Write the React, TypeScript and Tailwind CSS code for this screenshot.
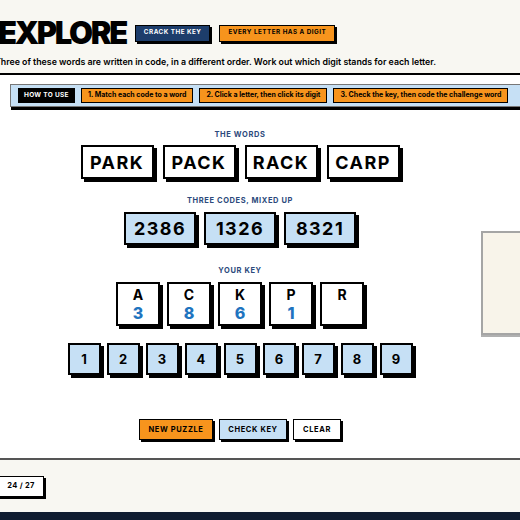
const WORDS = ["PARK", "PACK", "RACK", "CARP"]
const CODES = ["2386", "1326", "8321"]
const KEY: { letter: string; digit?: string }[] = [
    { letter: "A", digit: "3" },
    { letter: "C", digit: "8" },
    { letter: "K", digit: "6" },
    { letter: "P", digit: "1" },
    { letter: "R" },
]
const DIGITS = ["1", "2", "3", "4", "5", "6", "7", "8", "9"]
const STEPS = [
    "1. Match each code to a word",
    "2. Click a letter, then click its digit",
    "3. Check the key, then code the challenge word",
]

const SectionLabel = ({ children }: { children: string }) => (
    <div className="text-[7.5px] leading-none font-bold tracking-[0.08em] text-[#2c4a7c]">{children}</div>
)

export default function App() {
    return (
        <div className="w-[520px] h-[520px] overflow-hidden bg-white flex flex-col font-['Inter',sans-serif] text-black">
            {/* header */}
            <header className="h-[75px] shrink-0 bg-[#f8f7f2] border-b-2 border-black">
                <div className="flex items-center gap-[9px] pt-[17px]">
                    <h1 className="ml-[-2px] text-[31px] leading-[32px] font-black tracking-[-0.075em]">EXPLORE</h1>
                    <span className="h-[17px] px-[8px] flex items-center bg-[#1d3d6b] border border-black shadow-[2px_2px_0_#000] text-white text-[6.3px] font-bold tracking-[0.08em]">
                        CRACK THE KEY
                    </span>
                    <span className="h-[17px] px-[8px] flex items-center bg-[#f7941d] border border-black shadow-[2px_2px_0_#000] text-[6.3px] font-bold tracking-[0.08em]">
                        EVERY LETTER HAS A DIGIT
                    </span>
                </div>
                <p className="ml-[-5px] mt-[9px] text-[8.8px] leading-none font-semibold whitespace-nowrap">
                    Three of these words are written in code, in a different order. Work out which digit stands for each letter.
                </p>
            </header>

            {/* main */}
            <main className="flex-1 flex flex-col border-b-2 border-[#555]">
                <div className="ml-[10px] mt-[9px] w-[530px] h-[23px] flex items-center gap-[6px] px-[7px] bg-[#c6e0f5] border border-[#777] shadow-[1px_3px_0_#000]">
                    <span className="h-[15px] px-[6px] flex items-center bg-black text-white text-[6.5px] font-bold tracking-[0.05em]">HOW TO USE</span>
                    {STEPS.map(step => (
                        <span key={step} className="h-[15px] px-[6px] flex items-center bg-[#f7941d] border border-black text-[7px] font-bold whitespace-nowrap">
                            {step}
                        </span>
                    ))}
                </div>

                <div className="flex-1 flex items-center">
                    <div className="w-[480px] shrink-0 flex flex-col items-center pt-[22px]">
                        <SectionLabel>THE WORDS</SectionLabel>
                        <div className="mt-[7px] flex gap-[9px]">
                            {WORDS.map(w => (
                                <div key={w} className="w-[73px] h-[34px] flex items-center justify-center bg-white border-2 border-black shadow-[3px_3px_0_#000] text-[18px] font-bold tracking-[0.08em]">
                                    {w}
                                </div>
                            ))}
                        </div>

                        <div className="mt-[18px]"><SectionLabel>THREE CODES, MIXED UP</SectionLabel></div>
                        <div className="mt-[7px] flex gap-[8px]">
                            {CODES.map(c => (
                                <div key={c} className="w-[72px] h-[33px] flex items-center justify-center bg-[#c6e0f5] border-2 border-black shadow-[3px_3px_0_#000] text-[18px] font-bold tracking-[0.08em]">
                                    {c}
                                </div>
                            ))}
                        </div>

                        <div className="mt-[22px]"><SectionLabel>YOUR KEY</SectionLabel></div>
                        <div className="mt-[8px] flex gap-[7px]">
                            {KEY.map(k => (
                                <div key={k.letter} className="w-[44px] h-[44px] flex flex-col items-center pt-[4px] gap-[4px] bg-white border-2 border-black shadow-[3px_3px_0_#000]">
                                    <span className="text-[14px] leading-[14px] font-bold">{k.letter}</span>
                                    <span className="text-[16px] leading-[15px] font-extrabold text-[#1f74bf]">{k.digit}</span>
                                </div>
                            ))}
                        </div>

                        <div className="mt-[17px] flex gap-[6px]">
                            {DIGITS.map(d => (
                                <div key={d} className="w-[33px] h-[32px] flex items-center justify-center bg-[#c6e0f5] border-2 border-black shadow-[3px_3px_0_#000] text-[13px] font-bold">
                                    {d}
                                </div>
                            ))}
                        </div>

                        <div className="mt-[44px] mb-[16px] flex gap-[6px] text-[7.5px] font-bold tracking-[0.08em]">
                            <span className="w-[74px] h-[21px] flex items-center justify-center bg-[#f7941d] border-[1.5px] border-black shadow-[2px_2px_0_#000]">NEW PUZZLE</span>
                            <span className="w-[68px] h-[21px] flex items-center justify-center bg-[#c6e0f5] border-[1.5px] border-black shadow-[2px_2px_0_#000]">CHECK KEY</span>
                            <span className="w-[48px] h-[21px] flex items-center justify-center bg-white border-[1.5px] border-black shadow-[2px_2px_0_#000]">CLEAR</span>
                        </div>
                    </div>

                    {/* side panel */}
                    <div className="ml-[1px] w-[60px] h-[104px] shrink-0 bg-[#f8f4ea] border-2 border-[#a5a5a5] shadow-[0_2px_0_#b0b0b0]" />
                </div>
            </main>

            {/* footer */}
            <footer className="h-[52px] shrink-0 bg-[#f8f7f2] flex items-center">
                <span className="ml-[-6px] w-[50px] h-[21px] flex items-center justify-center bg-white border-[1.5px] border-black shadow-[2px_2px_0_#000] text-[7.5px] font-bold pl-[4px] tracking-[0.04em]">
                    24 / 27
                </span>
            </footer>
            <div className="h-[8px] shrink-0 bg-[#0f1c30]" />
        </div>
    )
}
